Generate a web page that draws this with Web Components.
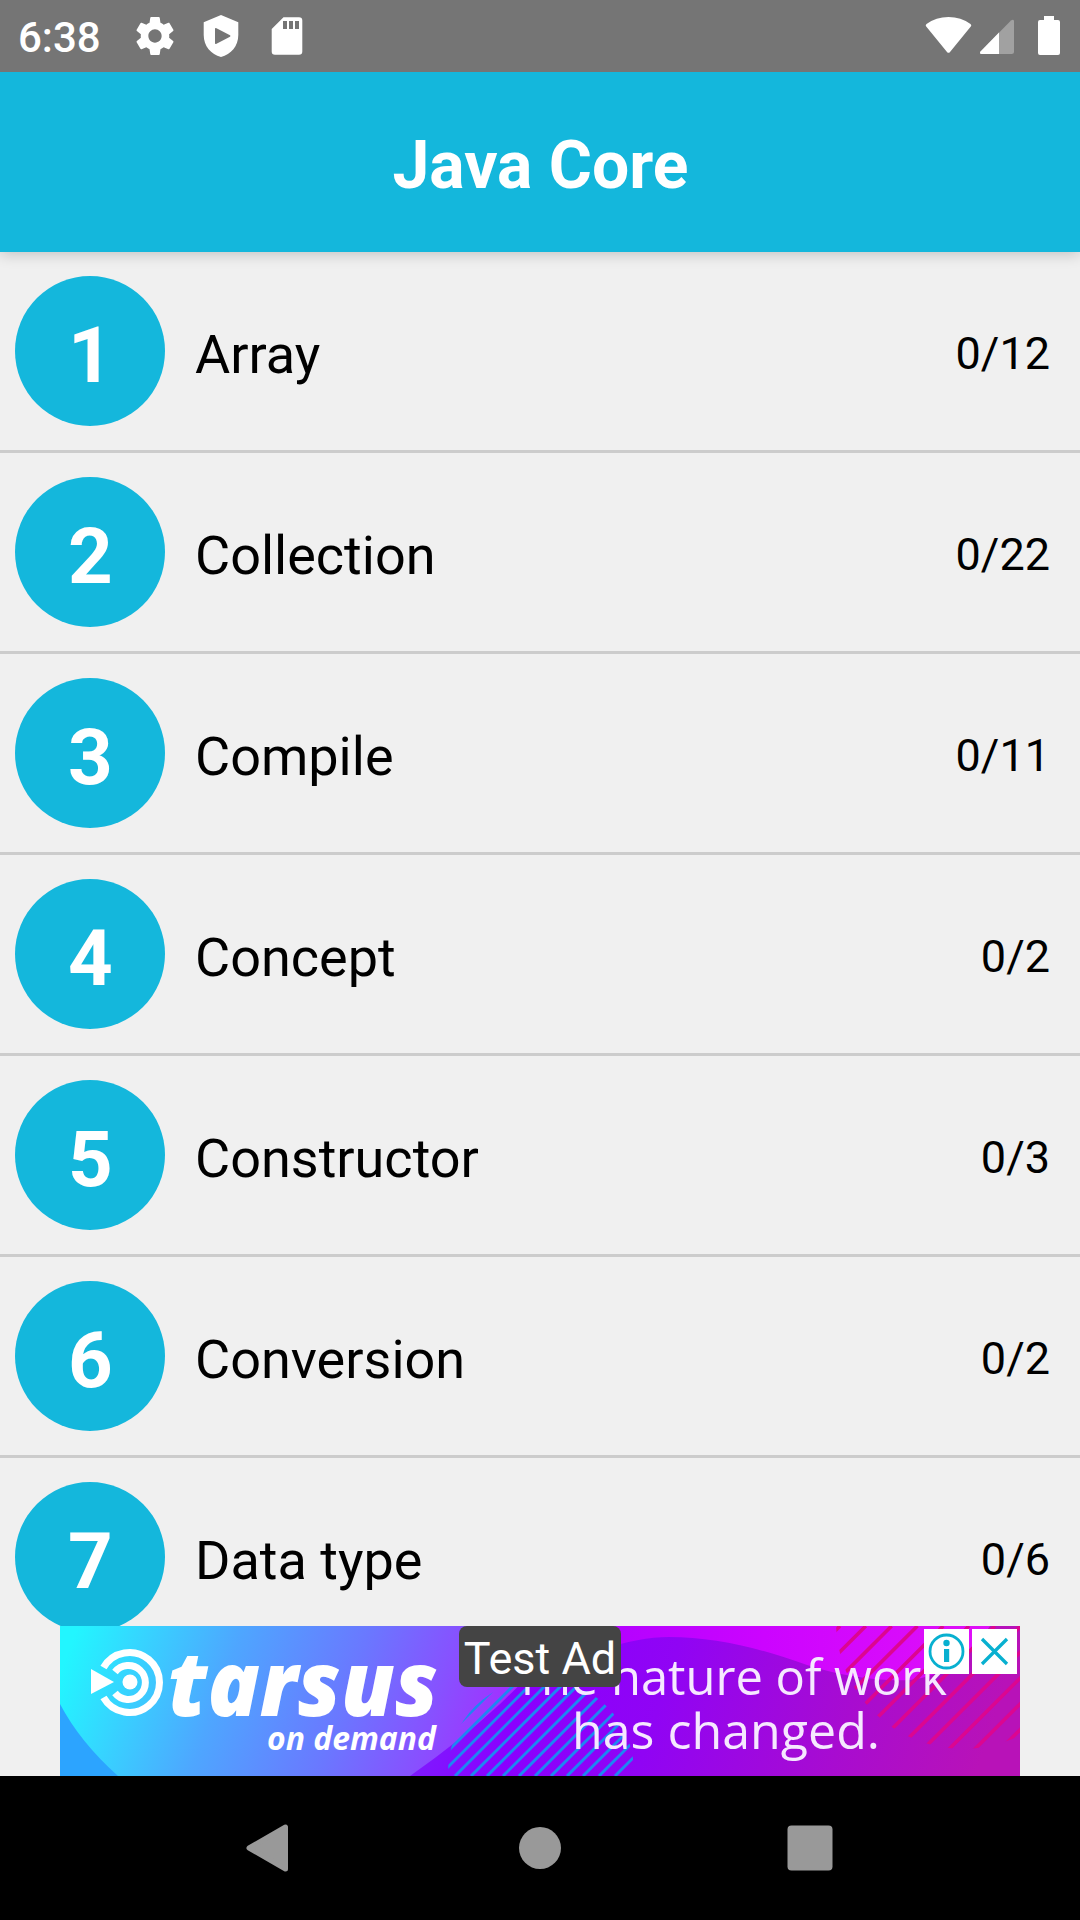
<!DOCTYPE html>
<html lang="en">
<head>
<meta charset="utf-8">
<title>Java Core</title>
<style>
html,body{margin:0;padding:0;background:#f0f0f0}
body{font-family:Roboto,"Noto Sans",sans-serif}
</style>
</head>
<body>
<quiz-app></quiz-app>
<script>
const define = (name, html) => customElements.define(name, class extends HTMLElement {
  constructor() {
    super();
    const t = document.createElement('template');
    t.innerHTML = html;
    this.attachShadow({ mode: 'open' }).append(t.content.cloneNode(true));
  }
});

// Parallel 45 degree strokes x + y = c across the banner, clipped by their group.
const stripes = (from, step, count) => Array.from({ length: count }, (_, i) => {
  const c = from + i * step;
  return `<path d="M${c - 150} 150L${c} 0"/>`;
}).join('');

define('status-bar', `
<style>
:host{display:flex;height:72px;background:#757575;color:#fff;justify-content:space-between;flex:none}
.time{font-size:42px;font-weight:500;line-height:75px;width:114px;padding-left:18px}
.left{display:flex}
svg{display:block}
</style>
<div class="left"><span class="time">6:38</span>
<svg width="200" height="72" viewBox="132 0 200 72" fill="#fff">
<path transform="translate(132.2 13.2) scale(1.9)" d="M19.43 12.98c.04-.32.07-.64.07-.98s-.03-.66-.07-.98l2.11-1.65c.19-.15.24-.42.12-.64l-2-3.46c-.12-.22-.39-.3-.61-.22l-2.49 1c-.52-.4-1.08-.73-1.69-.98l-.38-2.65C14.46 2.18 14.25 2 14 2h-4c-.25 0-.46.18-.49.42l-.38 2.65c-.61.25-1.17.59-1.69.98l-2.49-1c-.23-.09-.49 0-.61.22l-2 3.46c-.13.22-.07.49.12.64l2.11 1.65c-.04.32-.07.65-.07.98s.03.66.07.98l-2.11 1.65c-.19.15-.24.42-.12.64l2 3.46c.12.22.39.3.61.22l2.49-1c.52.4 1.08.73 1.69.98l.38 2.65c.03.24.24.42.49.42h4c.25 0 .46-.18.49-.42l.38-2.65c.61-.25 1.17-.59 1.69-.98l2.49 1c.23.09.49 0 .61-.22l2-3.46c.12-.22.07-.49-.12-.64l-2.11-1.65zM12 15.5c-1.93 0-3.500-1.57-3.500-3.500s1.570-3.500 3.500-3.500 3.500 1.570 3.500 3.500-1.570 3.500-3.500 3.500z"/>
<path fill-rule="evenodd" d="M221 15L238.300 22.300V35C238.300 46 231 54.500 221 57C211 54.500 203.700 46 203.700 35V22.300ZM215 29V43Q215 44.600 216.500 43.700L230 36.800Q231 36 230 35.200L216.500 28.200Q215 27.500 215 29Z"/>
<path fill-rule="evenodd" d="M283.500 17.200H299Q302.300 17.200 302.300 20.500V51.500Q302.300 54.800 299 54.800H275Q271.700 54.800 271.700 51.500V29ZM283 21V29H287V21ZM289 21V29H293V21ZM295 21V29H299V21Z"/>
</svg></div>
<svg width="160" height="72" viewBox="920 0 160 72" fill="#fff">
<path d="M926.200 26.500Q925 25 926.500 24Q936 17 948.500 17T970.500 24Q972 25 970.800 26.500L950 52Q948.500 53.700 947 52Z"/>
<path d="M1014 21V51.500Q1014 54 1011.500 54H981.500Q979 53.500 980.500 51.500L1011 20.500Q1013.500 19 1014 21Z" fill="#a1a1a1"/>
<path d="M999 32.500V54H981.500Q979 53.500 980.500 51.500Z"/>
<path d="M1044 16H1054V20H1058Q1060 20 1060 22V53Q1060 55 1058 55H1040Q1038 55 1038 53V22Q1038 20 1040 20H1044Z"/>
</svg>`);

define('app-header', `
<style>
:host{display:flex;flex:none;height:180px;background:#14b7dc;color:#fff;align-items:center;justify-content:center;font-size:66px;font-weight:700;box-shadow:0 2px 14px rgba(0,0,0,.2);clip-path:inset(0 0 -30px 0);z-index:1;position:relative}
span{line-height:78px;padding:8px 0 0 1px}
</style><span><slot></slot></span>`);

define('topic-row', `
<style>
:host{display:flex;flex:none;height:150px;padding:24px 30px 24px 15px;border-bottom:3px solid #ccc;align-items:center;color:#000}
.num{width:150px;height:150px;border-radius:50%;background:#14b7dc;color:#fff;font-weight:700;font-size:78px;line-height:159px;text-align:center;text-indent:1px}
.name{flex:1;margin-left:30px;font-size:54px;line-height:64px;padding-top:8px}
.count{font-size:45px;line-height:54px;padding-top:6px}
</style>
<div class="num"><slot name="num"></slot></div><div class="name"><slot></slot></div><div class="count"><slot name="count"></slot></div>`);

define('ad-banner', `
<style>
:host{display:flex;flex:none;height:150px;justify-content:center;background:#f0f0f0}
.ad{position:relative;width:960px;height:150px}
svg{display:block}
.tag{position:absolute;left:399px;top:0;width:162px;height:61px;border-radius:8px;background:#444;color:#fff;font-size:45px;line-height:66px;text-align:center;white-space:nowrap}
.btn{position:absolute;top:3px;width:45px;height:45px;background:#fff}
</style>
<div class="ad">
<svg width="960" height="150" viewBox="0 0 960 150">
<defs>
<linearGradient id="a" gradientUnits="userSpaceOnUse" x1="10" y1="20" x2="430" y2="170"><stop offset="0" stop-color="#22f6ff"/><stop offset=".13" stop-color="#34d8ff"/><stop offset=".35" stop-color="#4ea6ff"/><stop offset=".62" stop-color="#6a78ff"/><stop offset=".82" stop-color="#8850ff"/><stop offset="1" stop-color="#a828ff"/></linearGradient>
<linearGradient id="b" gradientUnits="userSpaceOnUse" x1="360" y1="60" x2="890" y2="230"><stop offset="0" stop-color="#7c20ff"/><stop offset=".18" stop-color="#8a00ff"/><stop offset=".42" stop-color="#9004f4"/><stop offset=".75" stop-color="#a80cd0"/><stop offset="1" stop-color="#b812b8"/></linearGradient>
<linearGradient id="c" x1="0" x2="1"><stop offset="0" stop-color="#a800ff"/><stop offset=".5" stop-color="#cc04ff"/><stop offset="1" stop-color="#e010f8"/></linearGradient>
<clipPath id="cb"><circle cx="481" cy="146" r="93"/></clipPath>
<clipPath id="cr"><circle cx="903" cy="-4" r="127"/></clipPath>
</defs>
<rect width="960" height="150" fill="url(#a)"/>
<path d="M0 78Q20 116 58 150H0Z" fill="#2ca4ff"/>
<path d="M350 150Q400 115 440 78L520 0H960V150Z" fill="url(#b)"/>
<path d="M480 0H930Q900 48 850 54Q800 56 747 39C700 22 655 11 609 11Q580 11 540 24Z" fill="url(#c)"/>
<g clip-path="url(#cb)" stroke="#1e86f2" stroke-width="3">${stripes(497, 16, 14)}</g>
<g clip-path="url(#cr)" stroke="#dc0690" stroke-width="3.600">${stripes(780, 25.8, 13)}</g>
<g fill="none" stroke="#fff" stroke-width="7"><path d="M43.500 41.500A30 30 0 1 1 43.500 71.500"/><path d="M55 46A17 17 0 1 1 55 67"/></g>
<circle cx="70" cy="56" r="7.500" fill="#fff"/><path d="M31 43L54 56L31 68Z" fill="#fff"/>
<g fill="#fff" font-family="Open Sans,Noto Sans,sans-serif">
<text x="108" y="90" font-size="91" font-weight="800" font-style="italic" textLength="270" lengthAdjust="spacingAndGlyphs">tarsus</text>
<text x="207" y="124" font-size="33" font-weight="700" font-style="italic" textLength="169" lengthAdjust="spacingAndGlyphs">on demand</text>
<text x="454" y="69" font-size="50" font-weight="500" fill="#f6e8ff" textLength="433" lengthAdjust="spacingAndGlyphs">The nature of work</text>
<text x="512" y="123" font-size="50" font-weight="500" fill="#f6e8ff" textLength="308" lengthAdjust="spacingAndGlyphs">has changed.</text>
</g></svg>
<div class="tag">Test Ad</div>
<div class="btn" style="left:864px"><svg width="45" height="45"><circle cx="22.500" cy="22.500" r="16.500" fill="none" stroke="#08b0d0" stroke-width="2.800"/><circle cx="22.500" cy="14" r="3.200" fill="#08b0d0"/><path d="M20 20h5.200v13H20z" fill="#08b0d0"/></svg></div>
<div class="btn" style="left:912px"><svg width="45" height="45"><path d="M10 10L35 35M35 10L10 35" stroke="#08b0d0" stroke-width="3.300"/></svg></div>
</div>`);

define('nav-bar', `
<style>
:host{display:flex;flex:none;height:144px;background:#000;justify-content:center}
svg{display:block}
</style>
<svg width="1080" height="144" fill="#999" stroke="#999" stroke-linejoin="round"><path d="M249 72L285.500 51V93Z" stroke-width="5"/><circle cx="540" cy="72" r="21" stroke="none"/><rect x="787.500" y="49.500" width="45" height="45" rx="4" stroke="none"/></svg>`);

define('quiz-app', `
<style>
:host{display:flex;flex-direction:column;width:1080px;height:1920px;overflow:hidden;background:#f0f0f0}
main{display:flex;flex-direction:column;height:1374px;overflow:hidden}
</style>
<status-bar></status-bar><app-header>Java Core</app-header>
<main></main><ad-banner></ad-banner><nav-bar></nav-bar>`);

const main = document.querySelector('quiz-app').shadowRoot.querySelector('main');
[['Array','0/12'],['Collection','0/22'],['Compile','0/11'],['Concept','0/2'],['Constructor','0/3'],['Conversion','0/2'],['Data type','0/6']].forEach(([n,c],i)=>{
  const row = document.createElement('topic-row');
  row.innerHTML = `<span slot="num">${i+1}</span>${n}<span slot="count">${c}</span>`;
  main.append(row);
});
</script>
</body>
</html>
